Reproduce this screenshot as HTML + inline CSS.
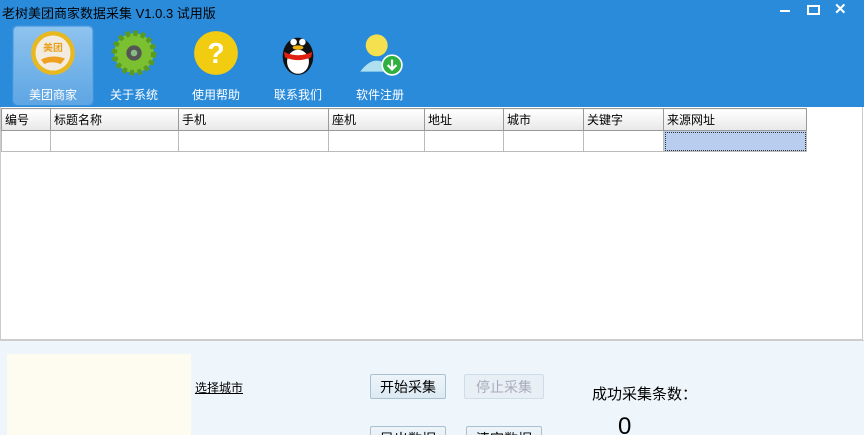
<html style="overflow:hidden;height:435px"><head><style>
body{margin:0;width:864px;height:435px;overflow:hidden;font-family:"Liberation Sans","Noto Sans CJK SC",sans-serif;position:relative;background:#fff}
.top{position:absolute;left:0;top:0;width:864px;height:107px;background:#2b8bdb}
.title{position:absolute;left:2px;top:3px;font-size:13px;color:#000}
.tb{position:absolute;top:27px;width:78px;height:77px;text-align:center;color:#fff;font-size:12px}
.tb span{position:absolute;left:0;right:0;top:59px}
.sel{background:linear-gradient(#8ec3ee,#5ea6e4);border-radius:3px;box-shadow:0 0 2px #cde}
.ic{position:absolute;left:16px;top:3px;width:46px;height:46px}
table{position:absolute;left:1px;top:108px;border-collapse:collapse;font-size:12px;table-layout:fixed;width:805px}
td{border:1px solid #bbb;height:21px;padding:0 3px;box-sizing:border-box}
th{border:1px solid #999;height:22px;padding:0 3px;text-align:left;font-weight:normal;background:linear-gradient(#fff,#e8e8e8);overflow:hidden;white-space:nowrap}
.bot{position:absolute;left:0;top:340px;width:864px;height:95px;background:#eef5fb;border-top:1px solid #ccc;overflow:hidden}
.btn{position:absolute;width:76px;height:25px;border:1px solid #a9c0d2;background:linear-gradient(#eef5fa,#dce9f3);font-size:14px;text-align:center;line-height:25px;border-radius:2px;box-sizing:border-box}
</style></head><body>
<div class="top">
<div class="title">老树美团商家数据采集 V1.0.3 试用版</div>
<div style="position:absolute;left:780px;top:10px;width:10px;height:2px;background:#fff"></div>
<div style="position:absolute;left:807px;top:5px;width:9px;height:6px;border:2px solid #fff"></div>
<div style="position:absolute;left:834px;top:0;color:#fff;font-size:15px;font-weight:bold">✕</div>
<div class="tb sel" style="left:14px"><svg class="ic" viewBox="0 0 42 42"><circle cx="21" cy="21" r="20" fill="#e8b820"/><circle cx="21" cy="21" r="16" fill="#f2ece0"/><text x="21" y="19" font-size="9" text-anchor="middle" fill="#e8a020" font-weight="bold">美团</text><path d="M10 27 Q20 22 32 26 L28 31 Q20 28 13 31Z" fill="#f0a020"/></svg><span>美团商家</span></div>
<div class="tb" style="left:95px"><svg class="ic" viewBox="0 0 42 42"><circle cx="21" cy="21" r="18" fill="#7bc030" stroke="#5a9a20" stroke-width="5" stroke-dasharray="4 3"/><circle cx="21" cy="21" r="7" fill="#555"/><circle cx="21" cy="21" r="3" fill="#8b8"/></svg><span>关于系统</span></div>
<div class="tb" style="left:177px"><svg class="ic" viewBox="0 0 42 42"><circle cx="21" cy="21" r="20" fill="#f2cc10"/><text x="21" y="30" font-size="26" font-weight="bold" text-anchor="middle" fill="#fff">?</text></svg><span>使用帮助</span></div>
<div class="tb" style="left:259px"><svg class="ic" viewBox="0 0 42 42"><ellipse cx="21" cy="24" rx="14" ry="17" fill="#111"/><ellipse cx="21" cy="29" rx="10" ry="11" fill="#fff"/><circle cx="17" cy="11" r="3" fill="#fff"/><circle cx="25" cy="11" r="3" fill="#fff"/><path d="M8 20 Q21 26 34 20 L33 25 Q21 30 9 25Z" fill="#e02010"/><ellipse cx="21" cy="16" rx="5" ry="2" fill="#f0b010"/></svg><span>联系我们</span></div>
<div class="tb" style="left:341px"><svg class="ic" viewBox="0 0 42 42"><circle cx="18" cy="14" r="10" fill="#f5e050"/><path d="M3 38 Q18 18 33 38Z" fill="#aee0f0"/><circle cx="32" cy="32" r="9" fill="#2fb040" stroke="#fff" stroke-width="1.5"/><path d="M32 27 V36 M28 32 L32 36 L36 32" stroke="#fff" stroke-width="2" fill="none"/></svg><span>软件注册</span></div>
</div>
<div style="position:absolute;left:0;top:107px;width:863px;height:233px;border:1px solid #ccc;border-top:none;box-sizing:border-box"></div>
<table>
<colgroup><col style="width:49px"><col style="width:128px"><col style="width:150px"><col style="width:96px"><col style="width:79px"><col style="width:80px"><col style="width:80px"><col style="width:143px"></colgroup>
<tr><th>编号</th><th>标题名称</th><th>手机</th><th>座机</th><th>地址</th><th>城市</th><th>关键字</th><th>来源网址</th></tr>
<tr><td></td><td></td><td></td><td></td><td></td><td></td><td></td><td style="background:#b9cdee;outline:1px dotted #333;outline-offset:-2px"></td></tr>
</table>
<div class="bot">
<div style="position:absolute;left:7px;top:13px;width:184px;height:82px;background:#fefbf0"></div>
<div style="position:absolute;left:195px;top:38px;font-size:12px;text-decoration:underline">选择城市</div>
<div class="btn" style="left:370px;top:33px">开始采集</div>
<div class="btn" style="left:464px;top:33px;width:80px;color:#aab;border-color:#d0dde6;background:#e8f0f6">停止采集</div>
<div style="position:absolute;left:592px;top:42px;font-size:15px">成功采集条数：</div>
<div class="btn" style="left:370px;top:85px">导出数据</div>
<div class="btn" style="left:466px;top:85px">清空数据</div>
<div style="position:absolute;left:618px;top:72px;font-size:24px">0</div>
</div>
</body></html>
